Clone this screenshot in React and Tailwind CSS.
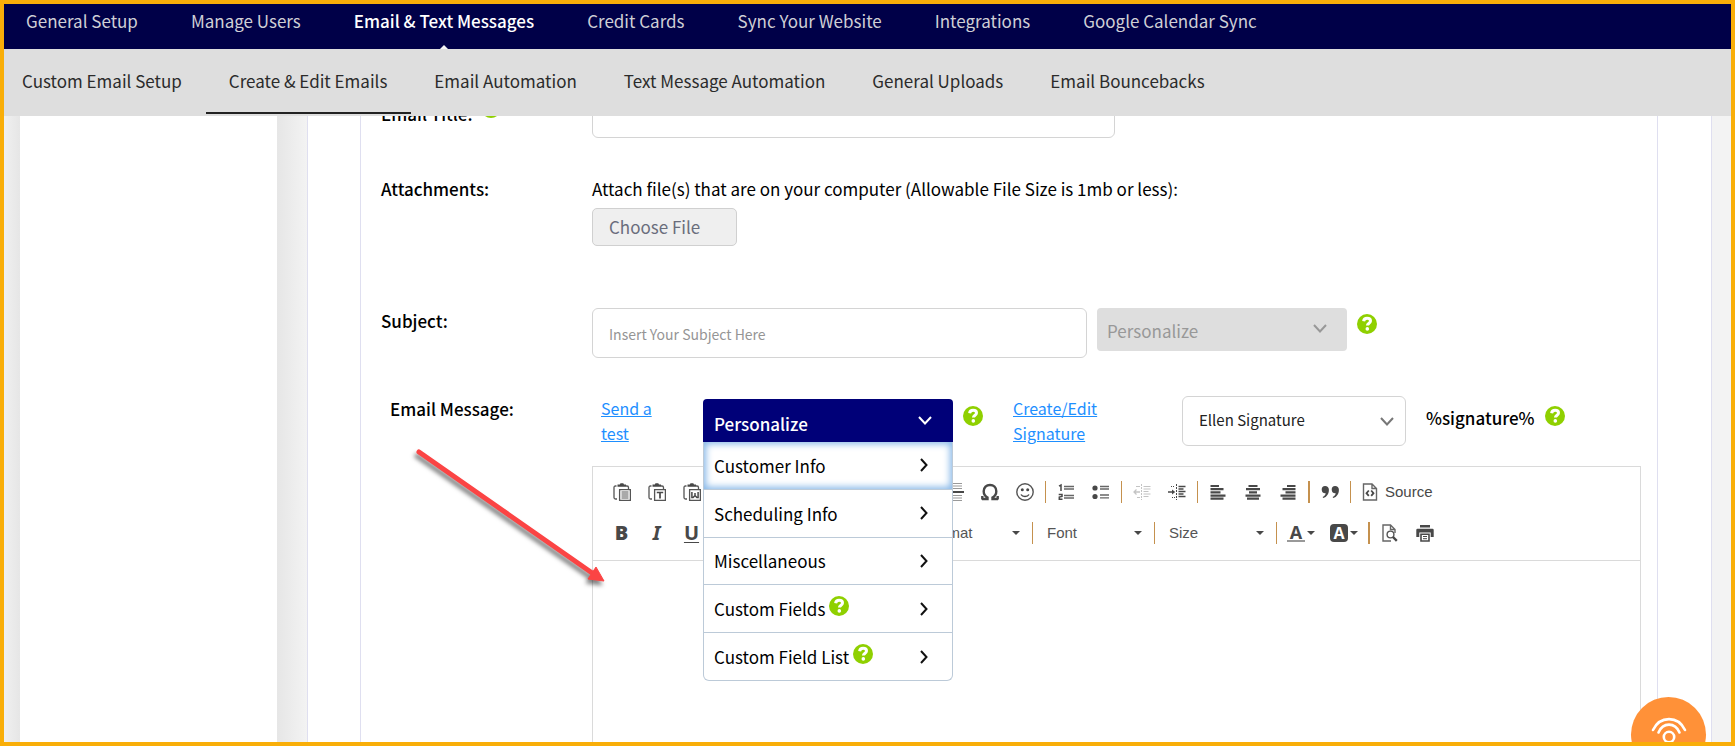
import React, { useState } from 'react';
import clsx from 'clsx';
import { Undo2, Redo2, Link, Unlink, Image, Table, Strikethrough, Subscript } from 'lucide-react';

const NAV_ITEMS = [
  'General Setup',
  'Manage Users',
  'Email & Text Messages',
  'Credit Cards',
  'Sync Your Website',
  'Integrations',
  'Google Calendar Sync',
];

const SUB_NAV_ITEMS = [
  'Custom Email Setup',
  'Create & Edit Emails',
  'Email Automation',
  'Text Message Automation',
  'General Uploads',
  'Email Bouncebacks',
];

const PERSONALIZE_ITEMS = [
  { label: 'Customer Info' },
  { label: 'Scheduling Info' },
  { label: 'Miscellaneous' },
  { label: 'Custom Fields', help: true },
  { label: 'Custom Field List', help: true },
];

function HelpIcon({ className }) {
  return (
    <button type="button" aria-label="Help" className={clsx('block h-5 w-5 shrink-0', className)}>
      <svg viewBox="0 0 20 20" className="h-5 w-5">
        <circle cx="10" cy="10" r="10" fill="#8fd000" />
        <path d="M6.6 7.2c.3-2 1.600-2.900 3.500-2.900s3.400 1 3.400 2.700c0 2.200-3.100 2.200-3.100 4.600" fill="none" stroke="#fff" strokeWidth="3" />
        <circle cx="10.3" cy="14.9" r="1.8" fill="#fff" />
      </svg>
    </button>
  );
}

function Chevron({ className }) {
  return (
    <svg viewBox="0 0 14 9" className={clsx('h-[9px] w-[14px] shrink-0', className)} fill="none" stroke="currentColor" strokeWidth="2">
      <path d="M1 1l6 6.5L13 1" />
    </svg>
  );
}

// Toolbar drawings, all on an 18px grid
const clipboard = (
  <>
    <path d="M3.5 3H2.5Q1 3 1 4.5v10Q1 16 2.5 16H4M13 3h1q1.5 0 1.5 1.5V6" fill="none" stroke="#555" strokeWidth="1.3" />
    <path d="M4.5 3.7V1.6h2.3L7.5.3h2.8l.7 1.3h2v2.1z" fill="#484848" />
    <path d="M6.6 6.6h10.8v10.8H6.6z" fill="#fff" stroke="#555" strokeWidth="1.3" />
  </>
);

const ICONS = {
  paste: (
    <>
      {clipboard}
      <path d="M8.5 9h7M8.5 11h7M8.5 13h7M8.5 15h7" stroke="#555" />
    </>
  ),
  pasteText: (
    <>
      {clipboard}
      <path d="M8.8 9.5h6.4M12 9v6.5" stroke="#484848" strokeWidth="1.7" fill="none" />
    </>
  ),
  pasteWord: (
    <>
      {clipboard}
      <path d="M8.9 9v5.5h1.2l1.9-2 1.9 2h1.2V9M12 10v3" stroke="#484848" strokeWidth="1.5" fill="none" />
    </>
  ),
  pageBreak: (
    <>
      <path d="M2 .5h14M2 3h14M2 5.5h14M2 12.5h14M2 15h14M2 17.5h14" stroke="#999" />
      <path d="M0 9h18" stroke="#484848" strokeWidth="2" />
    </>
  ),
  omega: (
    <path d="M1 16h5.5v-1.500C4 13.200 2.700 11.200 2.700 8.300 2.700 4.500 5.400 2 9 2s6.300 2.500 6.300 6.300c0 2.900-1.300 4.900-3.800 6.200V16H17M1.300 13v3.500M16.700 13v3.500" fill="none" stroke="#484848" strokeWidth="2.4" />
  ),
  smiley: (
    <>
      <circle cx="9" cy="9" r="8.2" fill="none" stroke="#555" strokeWidth="1.4" />
      <circle cx="6.3" cy="6.8" r="1.5" fill="#484848" />
      <circle cx="11.7" cy="6.8" r="1.5" fill="#484848" />
      <path d="M5 11.5c1.5 2.6 6.5 2.6 8 0" fill="none" stroke="#484848" strokeWidth="1.5" />
    </>
  ),
  numbered: (
    <>
      <path d="M2 3.2L4 2v6M1.700 11.500H5v2L2.300 14v2.300H5.500" fill="none" stroke="#484848" strokeWidth="1.5" />
      <path d="M7 3.500h10M7 6h10M7 12.500h10M7 15h10" stroke="#666" strokeWidth="1.3" />
    </>
  ),
  bullets: (
    <>
      <circle cx="3" cy="5" r="2.6" fill="#484848" />
      <circle cx="3" cy="13.5" r="2.6" fill="#484848" />
      <path d="M8 3.5h9M8 6h9M8 12h9M8 14.8h9" stroke="#666" strokeWidth="1.3" />
    </>
  ),
  outdent: (
    <g stroke="#c4c4c4" fill="none">
      <path d="M8.5 1v16" strokeDasharray="2 1" />
      <path d="M3 3.5h4M10.5 3.5h7M10.5 6h7M10.5 8.5h5M10.5 11h7M10.5 13.5h5M4 14.5h3" />
      <path d="M7 9H1M3.5 6.5L1 9l2.5 2.5" strokeWidth="1.3" />
    </g>
  ),
  indent: (
    <g stroke="#484848" fill="none">
      <path d="M8.5 1v16" strokeDasharray="2 1" />
      <path d="M3 3.5h4M4 14.5h3" strokeDasharray="1 1" />
      <path d="M10.5 3.5h7M10.5 6h5M10.5 8.5h7M10.5 11h5M10.5 13.5h7" strokeWidth="1.5" />
      <path d="M0 9h5" strokeWidth="1.5" />
      <path d="M4 6.5L7.2 9 4 11.5z" fill="#484848" stroke="none" />
    </g>
  ),
  alignLeft: <path d="M1.5 3h8.500M1.500 6.200h13M1.500 9.400h10M1.500 12.600h15M1.500 15.600h13" stroke="#484848" strokeWidth="2.2" />,
  alignCenter: <path d="M4.500 3h9M2 6.200h14M5 9.400h8M1.500 12.600h15M3 15.600h12" stroke="#484848" strokeWidth="2.2" />,
  alignRight: <path d="M8 3h8.500M3.500 6.200h13M6.500 9.400h10M1.500 12.600h15M3.500 15.600h13" stroke="#484848" strokeWidth="2.2" />,
  quote: (
    <path
      d="M4 3a3.700 3.700 0 0 1 3.900 3.900c0 4-2.200 6.900-5.600 8.100l-.7-1.100c2-1 3-2.200 3.100-3.700A3.600 3.600 0 1 1 4 3zM14 3a3.700 3.700 0 0 1 3.900 3.900c0 4-2.200 6.900-5.600 8.100l-.7-1.100c2-1 3-2.200 3.100-3.700A3.600 3.600 0 1 1 14 3z"
      fill="#484848"
    />
  ),
  source: (
    <>
      <path d="M2.5 1h8.500l4.500 4.500V17h-13zM11 1v4.500h4.500" fill="none" stroke="#666" strokeWidth="1.4" />
      <path d="M7.800 7.500L5.500 10.200l2.300 2.700M10.200 7.500l2.300 2.700-2.300 2.700" fill="none" stroke="#484848" strokeWidth="1.8" />
    </>
  ),
  preview: (
    <>
      <path d="M14 9V5.500L9.500 1H2v16h8M9.500 1v4.500H14" fill="none" stroke="#666" strokeWidth="1.4" />
      <circle cx="9.5" cy="10.5" r="3.4" fill="#fff" stroke="#555" strokeWidth="1.4" />
      <path d="M12 13l3.800 3.800" stroke="#484848" strokeWidth="2.4" />
    </>
  ),
  print: (
    <>
      <path d="M4 1h10v2.500H4zM1.500 4.700h15q1.200 0 1.200 1.200V13h-3V8.500H3.300V13h-3V5.900q0-1.200 1.200-1.200z" fill="#484848" />
      <path d="M5 10.200h8V17H5z" fill="none" stroke="#484848" strokeWidth="1.6" />
      <path d="M7 12.500h4M7 14.700h4" stroke="#484848" />
    </>
  ),
};

function ToolButton({ label, icon, children }) {
  return (
    <button type="button" aria-label={label} className="flex h-8 w-[35px] shrink-0 items-center justify-center text-[#484848]">
      {icon ? <svg viewBox="0 0 18 18" className="h-[18px] w-[18px]">{ICONS[icon]}</svg> : children}
    </button>
  );
}

function Separator({ wide }) {
  return <span className={clsx('mr-0.5 ml-[3px] h-[22px] shrink-0 bg-[#c5914e]', wide ? 'w-0.5' : 'w-px')} />;
}

function Caret({ className }) {
  return (
    <svg viewBox="0 0 8 4" className={clsx('h-1 w-2 shrink-0', className)}>
      <path d="M0 0h8L4 4z" fill="#484848" />
    </svg>
  );
}

function Combo({ label }) {
  return (
    <div className="relative flex w-[116px] shrink-0 items-center">
      <select aria-label={label} className="h-8 w-full appearance-none pl-3 font-[Liberation_Sans,sans-serif] text-[15px] text-[#555]">
        <option>{label}</option>
      </select>
      <Caret className="pointer-events-none absolute right-[9px]" />
    </div>
  );
}

function Toolbar() {
  return (
    <div className="overflow-hidden border-b border-[#dadada] px-[11px] pt-1 pb-[7px]">
      <div className="flex h-[41px] items-center">
        <ToolButton label="Paste" icon="paste" />
        <ToolButton label="Paste as plain text" icon="pasteText" />
        <ToolButton label="Paste from Word" icon="pasteWord" />
        <Separator />
        <ToolButton label="Undo"><Undo2 size={18} /></ToolButton>
        <ToolButton label="Redo"><Redo2 size={18} /></ToolButton>
        <Separator />
        <ToolButton label="Link"><Link size={18} /></ToolButton>
        <ToolButton label="Unlink"><Unlink size={18} /></ToolButton>
        <Separator />
        <ToolButton label="Image"><Image size={18} /></ToolButton>
        <ToolButton label="Table"><Table size={18} /></ToolButton>
        <ToolButton label="Page break" icon="pageBreak" />
        <ToolButton label="Special character" icon="omega" />
        <ToolButton label="Smiley" icon="smiley" />
        <Separator />
        <ToolButton label="Numbered list" icon="numbered" />
        <ToolButton label="Bulleted list" icon="bullets" />
        <Separator />
        <ToolButton label="Decrease indent" icon="outdent" />
        <ToolButton label="Increase indent" icon="indent" />
        <Separator />
        <ToolButton label="Align left" icon="alignLeft" />
        <ToolButton label="Center" icon="alignCenter" />
        <ToolButton label="Align right" icon="alignRight" />
        <Separator wide />
        <ToolButton label="Block quote" icon="quote" />
        <Separator />
        <button type="button" className="flex h-8 items-center gap-1.5 pl-2 font-[Liberation_Sans,sans-serif] text-[15px] text-[#484848]">
          <svg viewBox="0 0 18 18" className="h-[18px] w-[18px]">{ICONS.source}</svg>
          Source
        </button>
      </div>

      <div className="flex h-[41px] items-center font-[Open_Sans,sans-serif] text-xl">
        <ToolButton label="Bold"><span className="font-extrabold">B</span></ToolButton>
        <ToolButton label="Italic"><span className="font-[Noto_Sans,sans-serif] font-bold italic">I</span></ToolButton>
        <ToolButton label="Underline"><span className="font-bold underline decoration-1 underline-offset-2">U</span></ToolButton>
        <Separator />
        <ToolButton label="Strikethrough"><Strikethrough size={18} /></ToolButton>
        <ToolButton label="Subscript"><Subscript size={18} /></ToolButton>
        <Separator />
        <Combo label="Styles" />
        <Separator />
        <Combo label="Format" />
        <Separator />
        <Combo label="Font" />
        <Separator />
        <Combo label="Size" />
        <Separator />
        <button type="button" aria-label="Text color" className="flex h-8 w-[43px] shrink-0 items-center gap-0.5 pl-2 text-[#484848]">
          <span className="w-[18px] border-b-2 border-[#999] text-center text-lg leading-4 font-bold">A</span>
          <Caret />
        </button>
        <button type="button" aria-label="Background color" className="flex h-8 w-[43px] shrink-0 items-center gap-0.5 pl-2">
          <span className="h-[18px] w-[18px] rounded-sm bg-[#484848] text-center text-base leading-[18px] font-bold text-white">A</span>
          <Caret />
        </button>
        <Separator wide />
        <ToolButton label="Preview" icon="preview" />
        <ToolButton label="Print" icon="print" />
      </div>
    </div>
  );
}

function PersonalizeMenu() {
  const [open, setOpen] = useState(true);

  return (
    <div className="relative mt-[3px] w-[250px] shrink-0">
      <button
        type="button"
        onClick={() => setOpen(!open)}
        className="flex h-[43px] w-full items-center justify-between rounded-t bg-[#000078] pt-1.5 pr-[21px] pl-[11px] font-medium text-white"
      >
        Personalize
        <Chevron className="mb-1.5" />
      </button>
      {open && (
        <ul className="absolute top-full left-0 z-10 flex h-[239px] w-full flex-col rounded-b-md border border-t-0 border-[#bccad8] bg-white">
          {PERSONALIZE_ITEMS.map((item, i) => (
            <li
              key={item.label}
              className={clsx(
                'flex flex-1 items-center pr-6 pl-2.5',
                i > 0 ? 'border-t border-[#bccad8]' : 'shadow-[inset_0_0_7px_2px_#86b7e8]'
              )}
            >
              <button type="button">{item.label}</button>
              {item.help && <HelpIcon className="mb-1.5 ml-1" />}
              <svg viewBox="0 0 8 14" className="ml-auto h-[14px] w-2" fill="none" stroke="#111" strokeWidth="2">
                <path d="M1 1l5.5 6L1 13" />
              </svg>
            </li>
          ))}
        </ul>
      )}
    </div>
  );
}

function Header() {
  return (
    <header className="relative z-20 shrink-0">
      <nav className="flex h-[45px] gap-[53px] bg-[#000048] pt-1 pl-[22px] whitespace-nowrap">
        {NAV_ITEMS.map((item) => (
          <a
            key={item}
            href="#"
            className={clsx(
              'flex flex-col items-center justify-between',
              item === 'Email & Text Messages' ? 'font-medium text-white' : 'text-[#cfcfd6]'
            )}
          >
            {item}
            {item === 'Email & Text Messages' && (
              <svg viewBox="0 0 8 4" className="h-1 w-2">
                <path d="M0 4l4-4 4 4z" fill="#f4f4f4" />
              </svg>
            )}
          </a>
        ))}
      </nav>
      <nav className="flex h-[67px] bg-[#dedede] whitespace-nowrap text-[#2b2b2b]">
        {SUB_NAV_ITEMS.map((item, i) => (
          <a
            key={item}
            href="#"
            className={clsx(
              'flex h-[65px] items-center border-b-2 pr-6',
              i === 0 ? 'pl-[18px]' : 'pl-[23px]',
              item === 'Create & Edit Emails' ? 'border-[#222]' : 'border-transparent'
            )}
          >
            {item}
          </a>
        ))}
      </nav>
    </header>
  );
}

export default function App() {
  const [subject, setSubject] = useState('');

  return (
    <div className="relative flex h-screen flex-col overflow-hidden border-4 border-[#f9ae08] bg-white font-[Noto_Sans_CJK_SC,sans-serif] text-[17px] leading-[25px] text-black">
      <Header />

      <div className="flex min-h-0 flex-1">
        <div className="w-4 shrink-0 bg-linear-to-r from-[#f0f0f0] to-[#e6e6e6]" />
        <aside className="w-[257px] shrink-0" />
        <div className="w-[30px] shrink-0 bg-linear-to-r from-[#e6e6e6] to-[#f3f3f3]" />

        <main className="flex min-w-0 flex-1 overflow-hidden border-x border-[#dfdff0] pr-[53px] pl-[52px]">
          <form className="-mt-7 flex min-w-0 flex-1 flex-col border-x border-[#dfdff0] pr-4 pl-5" onSubmit={(e) => e.preventDefault()}>
            <div className="flex shrink-0 items-center">
              <div className="flex w-[211px] shrink-0 items-center gap-2">
                <label htmlFor="title" className="font-medium">Email Title:</label>
                <HelpIcon className="mb-2.5" />
              </div>
              <input id="title" type="text" className="h-[50px] w-[523px] rounded-md border border-[#d4d4d4] px-4" />
            </div>

            <div className="mt-[38px] flex shrink-0">
              <label htmlFor="attachments" className="w-[211px] shrink-0 font-medium">Attachments:</label>
              <div>
                <p>Attach file(s) that are on your computer (Allowable File Size is 1mb or less):</p>
                <button
                  id="attachments"
                  type="button"
                  className="mt-[7px] flex h-[38px] w-[145px] items-center rounded-[5px] border border-[#d0d0d0] bg-[#efefef] px-4 pb-0.5 text-[#6a6d7c]"
                >
                  Choose File
                </button>
              </div>
            </div>

            <div className="mt-[62px] flex shrink-0">
              <label htmlFor="subject" className="w-[211px] shrink-0 font-medium">Subject:</label>
              <input
                id="subject"
                type="text"
                value={subject}
                onChange={(e) => setSubject(e.target.value)}
                placeholder="Insert Your Subject Here"
                className="h-[50px] w-[495px] rounded-md border border-[#d4d4d4] px-4 pt-0.5 text-sm placeholder:text-[#959595]"
              />
              <button
                type="button"
                disabled
                className="ml-2.5 flex h-[43px] w-[250px] items-center justify-between rounded bg-[#dedede] pt-0.5 pr-5 pl-2.5 text-[#989898]"
              >
                Personalize
                <Chevron className="mb-1" />
              </button>
              <HelpIcon className="mt-1.5 ml-2.5" />
            </div>

            <div className="mt-[38px] flex h-[70px] shrink-0 items-start">
              <label htmlFor="message" className="w-[220px] shrink-0 pl-[9px] font-medium">Email Message:</label>
              <a href="#" className="mr-[42px] w-[60px] shrink-0 text-base leading-[25px] text-[#1e8fff] underline">Send a test</a>
              <PersonalizeMenu />
              <HelpIcon className="mt-2.5 ml-2.5" />
              <a href="#" className="ml-[30px] w-[100px] shrink-0 text-base leading-[25px] text-[#1e8fff] underline">Create/Edit Signature</a>
              <div className="relative ml-[69px] w-[224px] shrink-0">
                <select aria-label="Signature" className="h-[50px] w-full appearance-none rounded-md border border-[#d4d4d4] px-4 pb-[3px] text-[15px] text-[#222]">
                  <option>Ellen Signature</option>
                </select>
                <Chevron className="pointer-events-none absolute top-[21px] right-3 text-[#777]" />
              </div>
              <span className="mt-[9px] ml-5 font-medium">%signature%</span>
              <HelpIcon className="mt-2.5 ml-2.5" />
            </div>

            <div className="ml-[211px] flex min-h-0 flex-1 flex-col border border-b-0 border-[#dadada]">
              <Toolbar />
              <textarea id="message" className="w-full flex-1 resize-none p-5 outline-none" />
            </div>
          </form>
        </main>
        <div className="w-[19px] shrink-0 bg-[#f3f3f3]" />
      </div>

      {/* pointer over the message area */}
      <svg viewBox="0 0 200 145" className="pointer-events-none absolute top-[442px] left-[406px] h-[145px] w-[200px] drop-shadow-[-2px_4px_2px_rgba(0,0,0,0.5)]">
        <path d="M9 6l176 123" stroke="#fb4444" strokeWidth="5" strokeLinecap="round" />
        <path d="M194 135l-8-14-8 12z" fill="#fb4444" stroke="#fb4444" />
      </svg>

      <button type="button" aria-label="Support" className="absolute right-[25px] -bottom-[30px] z-20 flex h-[75px] w-[75px] justify-center rounded-full bg-[#ff9138] pt-5">
        <svg viewBox="0 0 36 28" className="h-7 w-9" fill="none" stroke="#fff" strokeWidth="2.6" strokeLinecap="round">
          <path d="M2 13C9-1.5 27-1.5 34 13" />
          <path d="M7.5 15.5C12 5 24 5 28.5 15.5" />
          <circle cx="18" cy="20" r="5.2" />
        </svg>
      </button>
    </div>
  );
}
